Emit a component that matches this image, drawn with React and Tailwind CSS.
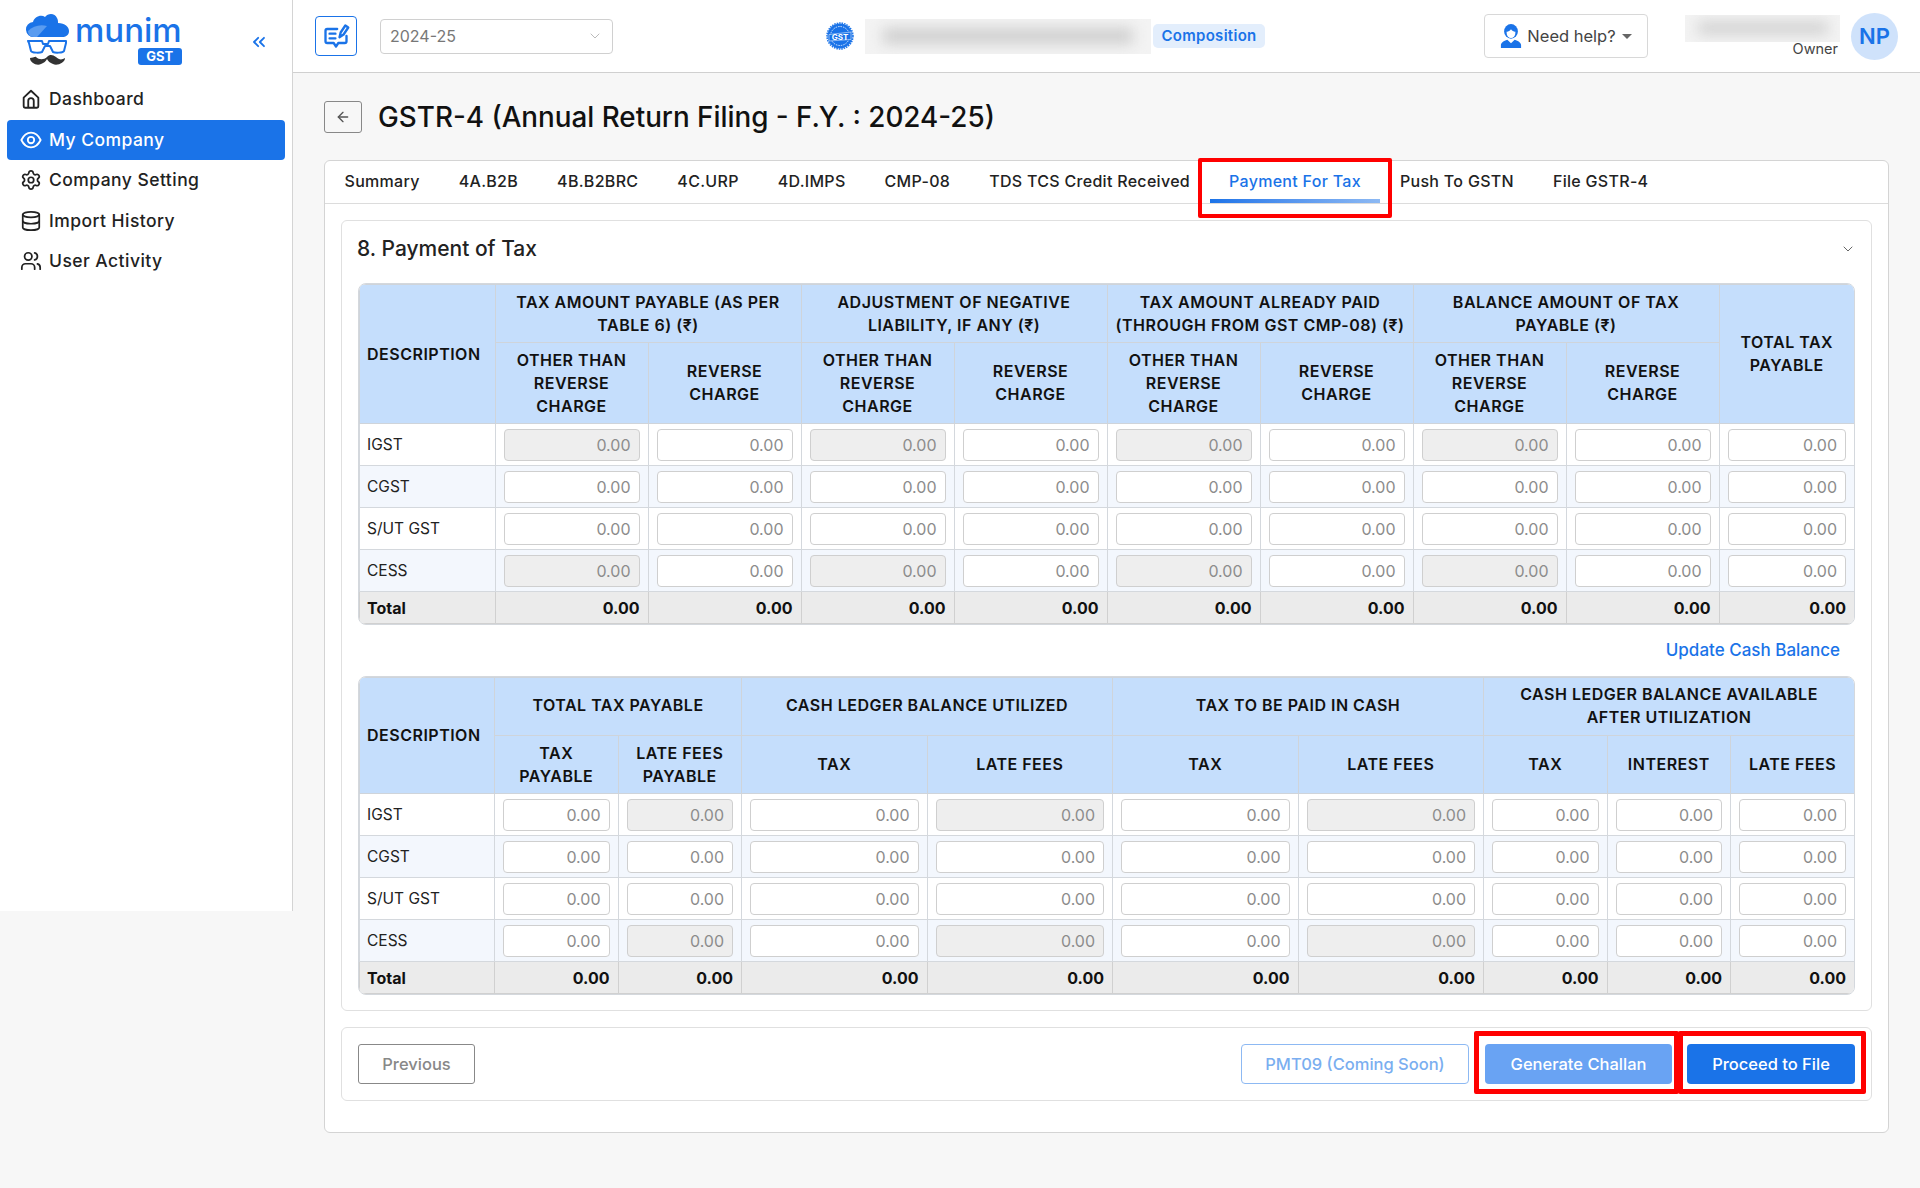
import { ArrowLeft, ChevronDown, ChevronsLeft, Database, Settings, Users } from "lucide-react";

const navItems = [
  { label: "Dashboard", icon: HomeIcon },
  { label: "My Company", icon: EyeIcon, active: true },
  { label: "Company Setting", icon: Settings },
  { label: "Import History", icon: Database },
  { label: "User Activity", icon: Users },
];

const tabs = [
  "Summary",
  "4A.B2B",
  "4B.B2BRC",
  "4C.URP",
  "4D.IMPS",
  "CMP-08",
  "TDS TCS Credit Received",
  "Payment For Tax",
  "Push To GSTN",
  "File GSTR-4",
];

const rows = ["IGST", "CGST", "S/UT GST", "CESS"];

const thClass = "border border-[#cfd4da] bg-[#c5defc] px-2 text-[16px] font-semibold leading-[23px] text-[#111] tracking-[0.5px]";

function HomeIcon({ className }) {
  return (
    <svg viewBox="0 0 24 24" fill="none" stroke="currentColor" strokeWidth="2" strokeLinejoin="round" className={className}>
      <path d="M4 10.500 12 3l8 7.500V20a1.500 1.500 0 0 1-1.500 1.500h-13A1.500 1.500 0 0 1 4 20z" />
      <path d="M9 21.500V14a3 3 0 0 1 6 0v7.500" />
    </svg>
  );
}

function EyeIcon({ className }) {
  return (
    <svg viewBox="0 0 24 24" fill="none" stroke="currentColor" strokeWidth="2" className={className}>
      <path d="M1.500 12c2.200-4.600 6-8 10.500-8s8.300 3.400 10.500 8c-2.200 4.600-6 8-10.500 8s-8.300-3.400-10.500-8z" strokeLinejoin="round" />
      <circle cx="12" cy="12" r="3.500" />
    </svg>
  );
}

function Logo() {
  return (
    <div className="flex items-start">
      <svg viewBox="0 0 43 52" className="h-[52px] w-[43px] shrink-0">
        <path d="M8 23a7.500 7.500 0 0 1-1-15c1-5 8-8 12-5 3-4 10-4 12 1 1 2 1 3 1 5 7 0 11 4 11 8 0 4-3 6-7 6z" fill="#1a73e8" />
        <path d="M2 17c5-5 12-7 19-5L11 23H8c-4 0-6-3-6-6z" fill="#5a9cf0" />
        <path d="M2 27h14l1 3h5l1-3h17v2l-2 8c-1 2-9 2-11 1l-3-6h-5l-3 6c-2 1-10 1-11-1L3 29z" fill="none" stroke="#1a73e8" strokeWidth="2" strokeLinejoin="round" />
        <path d="M4 44c0 5 7 8 11 6 3-1 5-3 6-5 1 2 3 4 6 5 4 2 12-1 12-6-3 2-6 2-9-1-3-2-6-3-9 0-3 3-8 3-11 0 0-1-4 1-6 1z" fill="#333" />
      </svg>
      <div className="ml-[6px] flex flex-col items-end">
        <span className="mt-[-1px] text-[33px] font-medium leading-[35px] text-[#1a73e8]">munim</span>
        <span className="flex h-[17px] w-[44px] items-center justify-center rounded-[3px] bg-[#1a73e8] text-[13px] font-bold leading-none text-white">GST</span>
      </div>
    </div>
  );
}

function Sidebar() {
  return (
    <aside className="h-[911px] w-[293px] shrink-0 border-r border-[#d4d4d4] bg-white">
      <div className="flex h-[79px] items-start justify-between pl-[26px] pr-[23px] pt-[14px]">
        <Logo />
        <ChevronsLeft className="mt-[18px] h-[20px] w-[20px] text-[#1a73e8]" strokeWidth={2.2} />
      </div>
      <nav className="flex flex-col px-[7px]">
        {navItems.map(({ label, icon: Icon, active }) => (
          <div
            key={label}
            className={`flex h-[40.5px] items-center gap-[7px] rounded-[4px] pl-[13px] text-[17.5px] font-medium tracking-[0.45px] ${
              active ? "bg-[#1a73e8] text-white" : "text-[#222]"
            }`}
          >
            <Icon className="h-[22px] w-[22px] shrink-0" strokeWidth={1.9} />
            <span>{label}</span>
          </div>
        ))}
      </nav>
    </aside>
  );
}

function Blurred({ className, inner }) {
  return (
    <div className={`flex items-center justify-center overflow-hidden bg-[#f3f3f3] ${className}`}>
      <div className={`bg-[#cfcfcf] blur-[7px] ${inner}`} />
    </div>
  );
}

function Header() {
  return (
    <header className="flex h-[73px] items-center border-b border-[#d0d0d0] bg-white pl-[22px]">
      <div className="flex h-[40px] w-[42px] items-center justify-center rounded-[4px] border border-[#1a73e8]">
        <svg viewBox="0 0 24 24" className="h-[28px] w-[28px]" fill="none" stroke="#1a73e8" strokeWidth="2" strokeLinecap="round" strokeLinejoin="round">
          <path d="M13 6H4.500A1.500 1.500 0 0 0 3 7.500v9A1.500 1.500 0 0 0 4.500 18H10l2 3 2-3h5.500a1.500 1.500 0 0 0 1.500-1.500V12" />
          <path d="M6.500 10h5M6.500 14h5" />
          <path d="M15 13l1-4 4-6 2.500 1.700-4 6z" />
        </svg>
      </div>
      <div className="ml-[23px] flex h-[35px] w-[233px] items-center justify-between rounded-[4px] border border-[#d0d0d0] px-[9px] text-[16px] text-[#777]">
        <span>2024-25</span>
        <ChevronDown className="h-[16px] w-[16px] text-[#bbb]" strokeWidth={1.5} />
      </div>
      <svg viewBox="0 0 28 28" className="ml-[213px] h-[28px] w-[28px]">
        <circle cx="14" cy="14" r="12.500" fill="#1a73e8" />
        <circle cx="14" cy="14" r="13" fill="none" stroke="#1a73e8" strokeWidth="1.500" strokeDasharray="1.500 1" />
        <circle cx="14" cy="14" r="9.500" fill="none" stroke="#fff" strokeWidth="0.800" strokeDasharray="1.500 1" />
        <path d="M3 12.500 25 10v7.500L3 19z" fill="#1a73e8" stroke="#fff" strokeWidth="0.500" />
        <text x="14" y="17.500" textAnchor="middle" fontSize="8" fontWeight="700" fill="#fff">GST</text>
      </svg>
      <Blurred className="ml-[11px] h-[35px] w-[286px]" inner="h-[16px] w-[250px]" />
      <span className="ml-[2px] flex h-[24px] w-[112px] items-center justify-center rounded-[5px] bg-[#e3eefc] text-[15px] font-semibold tracking-[0.3px] text-[#1a73e8]">
        Composition
      </span>
      <button className="ml-[219px] flex h-[44px] w-[164px] items-center justify-center gap-[5px] rounded-[4px] border border-[#d8d8d8] text-[16.5px] text-[#444]">
        <svg viewBox="0 0 24 28" className="h-[26px] w-[22px]">
          <ellipse cx="12" cy="9" rx="7.500" ry="8" fill="#1a73e8" />
          <ellipse cx="12" cy="10.500" rx="4.800" ry="5.800" fill="#fff" />
          <path d="M7.200 9.500c2-.5 3.700-1.500 4.800-3 1 1.500 2.800 2.500 4.800 3 0-3-2-5.500-4.800-5.500s-4.800 2.500-4.800 5.500z" fill="#1a73e8" />
          <path d="M1 27v-3c0-3 3-4.500 7-6l4 4 4-4c4 1.500 7 3 7 6v3z" fill="#1a73e8" />
        </svg>
        <span>Need help?</span>
        <span className="ml-[1px] h-0 w-0 border-x-[5px] border-t-[5px] border-x-transparent border-t-[#666]" />
      </button>
      <div className="ml-[37px] flex w-[155px] flex-col items-end">
        <Blurred className="h-[27px] w-[155px]" inner="h-[12px] w-[130px]" />
        <span className="mr-[2px] mt-[-2px] text-[14.5px] leading-[18px] text-[#444]">Owner</span>
      </div>
      <div className="ml-[11px] flex h-[47px] w-[47px] items-center justify-center rounded-full bg-[#cfe2fb] text-[22px] font-semibold text-[#1a73e8]">
        NP
      </div>
    </header>
  );
}

function Amount({ disabled }) {
  return (
    <input
      readOnly
      value="0.00"
      className={`h-[32px] w-full rounded-[4px] border border-[#cfcfcf] px-[8px] text-right text-[16px] text-[#8c8c8c] outline-none ${
        disabled ? "bg-[#eeeeee]" : "bg-white"
      }`}
    />
  );
}

function BodyRows({ count, disabledCols }) {
  return (
    <tbody>
      {rows.map((row, i) => (
        <tr key={row} className={i % 2 === 1 ? "bg-[#f3f7fd]" : "bg-white"}>
          <td className="h-[42px] border border-[#d4d8dd] px-[7px] text-[15.5px] text-[#222]">{row}</td>
          {Array.from({ length: count }).map((_, c) => (
            <td key={c} className="h-[42px] border border-[#d4d8dd] px-[8px]">
              <Amount disabled={row !== "CGST" && row !== "S/UT GST" && disabledCols.includes(c)} />
            </td>
          ))}
        </tr>
      ))}
      <tr className="bg-[#ebebeb]">
        <td className="h-[32px] border border-[#d0d0d0] px-[7px] text-[16px] font-bold text-[#111]">Total</td>
        {Array.from({ length: count }).map((_, c) => (
          <td key={c} className="h-[32px] border border-[#d0d0d0] px-[8px] text-right text-[16px] font-bold text-[#111]">
            0.00
          </td>
        ))}
      </tr>
    </tbody>
  );
}

function TaxTable() {
  const groups = [
    "TAX AMOUNT PAYABLE (AS PER TABLE 6) (₹)",
    "ADJUSTMENT OF NEGATIVE LIABILITY, IF ANY (₹)",
    "TAX AMOUNT ALREADY PAID (THROUGH FROM GST CMP-08) (₹)",
    "BALANCE AMOUNT OF TAX PAYABLE (₹)",
  ];
  return (
    <div className="overflow-hidden rounded-[8px] border border-[#d4d8dd]">
      <table className="w-full table-fixed border-collapse">
        <colgroup>
          <col className="w-[135.5px]" />
          {Array.from({ length: 8 }).map((_, i) => (
            <col key={i} className="w-[153px]" />
          ))}
          <col className="w-[135.5px]" />
        </colgroup>
        <thead>
          <tr>
            <th rowSpan={2} className={`${thClass} pl-[7px] text-left`}>DESCRIPTION</th>
            {groups.map((g) => (
              <th key={g} colSpan={2} className={`${thClass} h-[58px] px-[6px]`}>{g}</th>
            ))}
            <th rowSpan={2} className={thClass}>TOTAL TAX PAYABLE</th>
          </tr>
          <tr>
            {groups.map((g) => [
              <th key={g + "o"} className={`${thClass} h-[81px] px-[14px]`}>OTHER THAN REVERSE CHARGE</th>,
              <th key={g + "r"} className={`${thClass} h-[81px]`}>REVERSE CHARGE</th>,
            ])}
          </tr>
        </thead>
        <BodyRows count={9} disabledCols={[0, 2, 4, 6]} />
      </table>
    </div>
  );
}

function CashTable() {
  return (
    <div className="overflow-hidden rounded-[8px] border border-[#d4d8dd]">
      <table className="w-full table-fixed border-collapse">
        <colgroup>
          <col className="w-[135px]" />
          <col className="w-[123.5px]" />
          <col className="w-[123.5px]" />
          <col className="w-[185.5px]" />
          <col className="w-[185.5px]" />
          <col className="w-[185.5px]" />
          <col className="w-[185.5px]" />
          <col className="w-[123.5px]" />
          <col className="w-[123.5px]" />
          <col className="w-[124px]" />
        </colgroup>
        <thead>
          <tr>
            <th rowSpan={2} className={`${thClass} pl-[7px] text-left`}>DESCRIPTION</th>
            <th colSpan={2} className={`${thClass} h-[58px] pb-[2px]`}>TOTAL TAX PAYABLE</th>
            <th colSpan={2} className={`${thClass} pb-[2px]`}>CASH LEDGER BALANCE UTILIZED</th>
            <th colSpan={2} className={`${thClass} pb-[2px]`}>TAX TO BE PAID IN CASH</th>
            <th colSpan={3} className={`${thClass} px-[24px] pb-[2px]`}>CASH LEDGER BALANCE AVAILABLE AFTER UTILIZATION</th>
          </tr>
          <tr>
            <th className={`${thClass} h-[58px] px-[16px]`}>TAX PAYABLE</th>
            <th className={thClass}>LATE FEES PAYABLE</th>
            <th className={thClass}>TAX</th>
            <th className={thClass}>LATE FEES</th>
            <th className={thClass}>TAX</th>
            <th className={thClass}>LATE FEES</th>
            <th className={thClass}>TAX</th>
            <th className={thClass}>INTEREST</th>
            <th className={thClass}>LATE FEES</th>
          </tr>
        </thead>
        <BodyRows count={9} disabledCols={[1, 3, 5]} />
      </table>
    </div>
  );
}

export default function App() {
  return (
    <div className="flex min-h-[1188px] bg-[#f7f7f7] font-['Inter','Noto_Sans',sans-serif]">
      <Sidebar />
      <main className="min-w-0 flex-1">
        <Header />
        <div className="px-[31px] pt-[28px]">
          <div className="flex items-center gap-[16px]">
            <button className="flex h-[32px] w-[38px] items-center justify-center rounded-[3px] border border-[#888] bg-[#f7f7f7]">
              <ArrowLeft className="h-[16px] w-[16px] text-[#555]" strokeWidth={2} />
            </button>
            <h1 className="text-[27.8px] font-medium leading-[32px] text-[#111]">
              GSTR-4 (Annual Return Filing - F.Y. : 2024-25)
            </h1>
          </div>

          <section className="mt-[27px] rounded-[6px] border border-[#d4d4d4] bg-white pb-[31px]">
            <div className="flex h-[43px] items-stretch border-b border-[#dcdcdc]">
              {tabs.map((tab) => {
                const active = tab === "Payment For Tax";
                return (
                  <div
                    key={tab}
                    className={`relative flex items-center px-[19.5px] pb-[3px] text-[16px] font-medium tracking-[0.3px] ${
                      active ? "text-[#1a73e8]" : "text-[#222]"
                    }`}
                  >
                    {tab}
                    {active && (
                      <>
                        <span className="absolute inset-x-0 bottom-0 h-[4px] bg-gradient-to-r from-[#1a73e8] to-[#8db9f3]" />
                        <span className="absolute -inset-x-[12px] -bottom-[15px] -top-[3px] rounded-[2px] border-[4px] border-[#ff0000]" />
                      </>
                    )}
                  </div>
                );
              })}
            </div>

            <div className="mx-[16px] mt-[16px] rounded-[6px] border border-[#e0e0e0] px-[16px] pb-[15px]">
              <div className="flex h-[62px] items-center justify-between pb-[6px]">
                <h2 className="ml-[-1px] text-[21px] font-medium text-[#222]">8. Payment of Tax</h2>
                <ChevronDown className="mr-[-1px] h-[16px] w-[16px] text-[#666]" strokeWidth={1.5} />
              </div>
              <TaxTable />
              <div className="flex h-[51px] items-center justify-end pr-[15px] text-[17px] font-medium text-[#1a73e8]">
                Update Cash Balance
              </div>
              <CashTable />
            </div>

            <div className="mx-[16px] mt-[16px] flex items-center rounded-[6px] border border-[#e0e0e0] p-[16px] text-[16.5px] font-medium">
              <button className="h-[40px] w-[117px] rounded-[3px] border border-[#888] text-[#888]">
                Previous
              </button>
              <button className="ml-auto h-[40px] w-[228px] rounded-[4px] border border-[#8db9f3] text-[#7aaef0]">
                PMT09 (Coming Soon)
              </button>
              <button className="relative ml-[16px] h-[40px] w-[187px] rounded-[4px] bg-[#69a3f3] text-white">
                Generate Challan
                <span className="absolute -bottom-[10px] -left-[11px] -right-[7px] -top-[13px] rounded-[2px] border-[5px] border-[#ff0000]" />
              </button>
              <button className="relative ml-[15px] h-[40px] w-[168px] rounded-[4px] bg-[#1a73e8] text-white">
                Proceed to File
                <span className="absolute -bottom-[10px] -left-[9px] -right-[11px] -top-[13px] rounded-[2px] border-[5px] border-[#ff0000]" />
              </button>
            </div>
          </section>
        </div>
      </main>
    </div>
  );
}
